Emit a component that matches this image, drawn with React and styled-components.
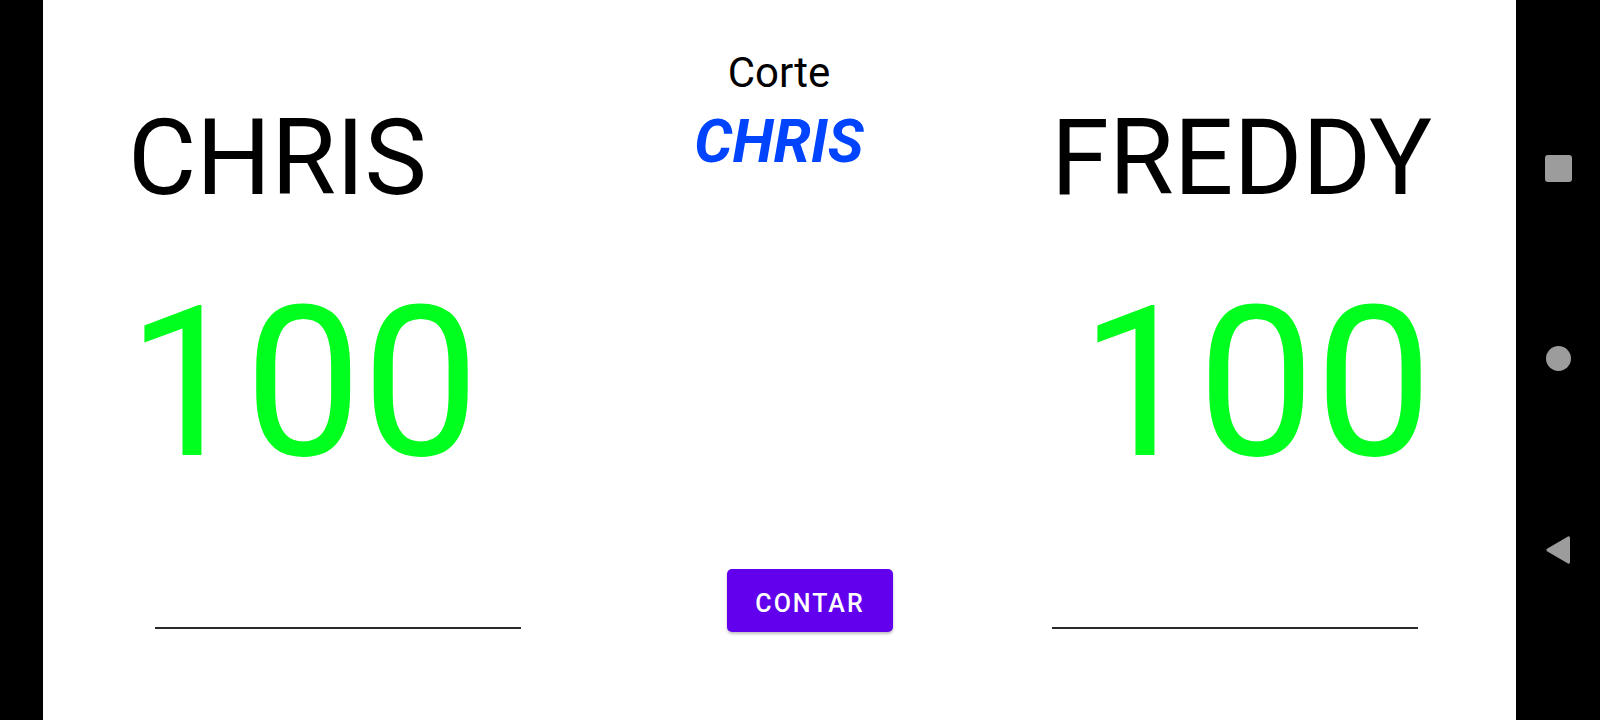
import styled, { createGlobalStyle } from "styled-components";

const GlobalStyle = createGlobalStyle`
  html, body {
    margin: 0;
    padding: 0;
    background: #000;
  }
  body {
    font-family: Roboto, "Liberation Sans", sans-serif;
  }
`;

const Screen = styled.div`
  display: flex;
  width: 1600px;
  height: 720px;
  overflow: hidden;
`;

const Cutout = styled.div`
  width: 43px;
  background: #000;
`;

const Main = styled.main`
  flex: 1;
  display: grid;
  grid-template-columns: 622px 228px 1fr;
  background: #fff;
`;

const Column = styled.section`
  display: flex;
  flex-direction: column;
  align-items: flex-start;
  padding-top: ${(p) => p.$top}px;
  padding-left: ${(p) => p.$left}px;
`;

const Center = styled.section`
  display: flex;
  flex-direction: column;
  align-items: center;
  padding-top: 52px;
`;

const PlayerName = styled.div`
  margin-left: ${(p) => p.$indent || 0}px;
  font-size: 105px;
  line-height: 1;
  color: #000;
  white-space: nowrap;
`;

const Score = styled.div`
  margin-top: 68px;
  margin-left: ${(p) => p.$indent || 0}px;
  font-size: 209px;
  line-height: 1;
  color: #00ff1e;
`;

const Input = styled.div`
  margin-top: 139px;
  margin-left: ${(p) => p.$indent || 0}px;
  width: 366px;
  height: 2px;
  background: #2a2a2a;
`;

const Label = styled.div`
  font-size: 42px;
  line-height: 1;
  color: #000;
`;

const Dealer = styled.div`
  margin-top: 18px;
  font-size: 60px;
  line-height: 1;
  font-weight: 700;
  font-style: italic;
  color: #0044ff;
`;

const CountButton = styled.button`
  align-self: flex-end;
  margin-top: 397px;
  width: 166px;
  height: 63px;
  padding: 5px 0 0;
  border: none;
  border-radius: 5px;
  background: #6200ee;
  color: #fff;
  font-family: Roboto, "Liberation Sans", sans-serif;
  font-weight: 500;
  font-size: 25px;
  letter-spacing: 2px;
  box-shadow: 0 2px 3px rgba(0, 0, 0, 0.25);
  cursor: pointer;
`;

const NavBar = styled.nav`
  width: 84px;
  background: #000;
  display: flex;
  flex-direction: column;
  align-items: center;
  justify-content: center;
  gap: 164px;
`;

const NavSquare = styled.div`
  width: 27px;
  height: 27px;
  border-radius: 3px;
  background: #9c9c9c;
`;

const NavCircle = styled.div`
  width: 25px;
  height: 25px;
  border-radius: 50%;
  background: #9c9c9c;
`;

function BackIcon() {
  return (
    <svg width="26" height="30" viewBox="0 0 26 30">
      <path
        d="M23 1.5 Q25 0.8 25 3 L25 27 Q25 29.2 23 28.5 L2 16.2 Q0.5 15 2 13.8 Z"
        fill="#9c9c9c"
      />
    </svg>
  );
}

export default function App() {
  return (
    <>
      <GlobalStyle />
      <Screen>
        <Cutout />
        <Main>
          <Column $top={106} $left={80}>
            <PlayerName $indent={5}>CHRIS</PlayerName>
            <Score $indent={4}>100</Score>
            <Input $indent={32} />
          </Column>
          <Center>
            <Label>Corte</Label>
            <Dealer>CHRIS</Dealer>
            <CountButton>CONTAR</CountButton>
          </Center>
          <Column $top={106} $left={153}>
            <PlayerName $indent={5}>FREDDY</PlayerName>
            <Score $indent={34}>100</Score>
            <Input $indent={6} />
          </Column>
        </Main>
        <NavBar>
          <NavSquare />
          <NavCircle />
          <BackIcon />
        </NavBar>
      </Screen>
    </>
  );
}
